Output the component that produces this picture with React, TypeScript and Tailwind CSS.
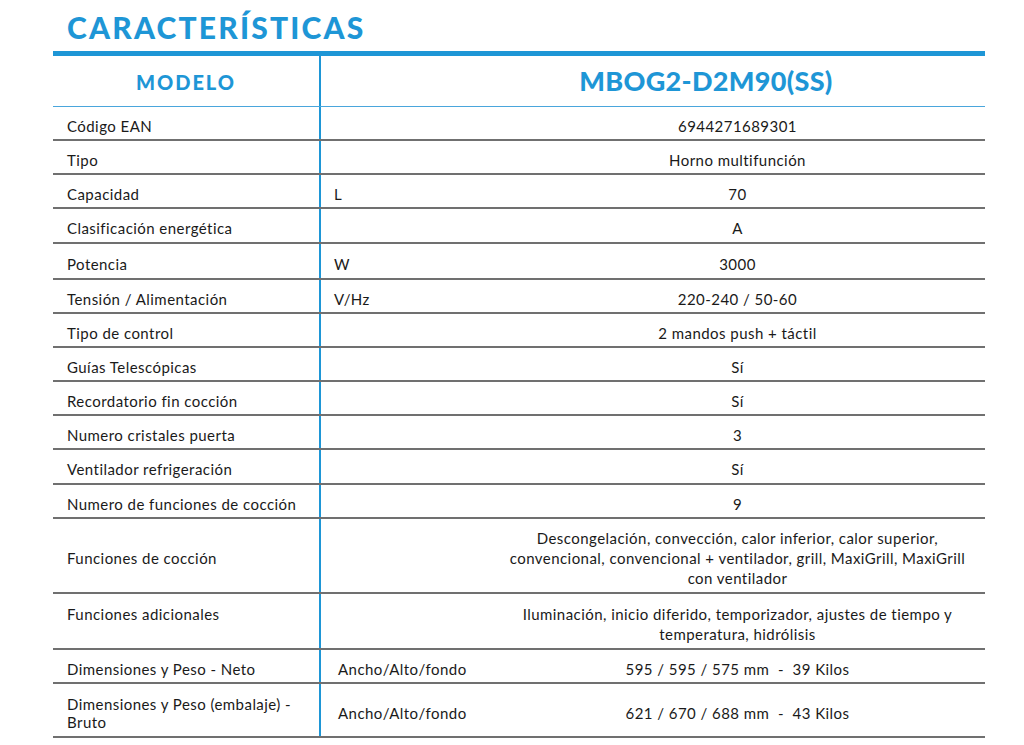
const rows: { label: string; unit?: string; value: string; h: string; labelTop?: boolean }[] = [
  { label: "Código EAN", value: "6944271689301", h: "h-[34px]" },
  { label: "Tipo", value: "Horno multifunción", h: "h-[34px]" },
  { label: "Capacidad", unit: "L", value: "70", h: "h-[34px]" },
  { label: "Clasificación energética", value: "A", h: "h-[35px]" },
  { label: "Potencia", unit: "W", value: "3000", h: "h-[36px]" },
  { label: "Tensión / Alimentación", unit: "V/Hz", value: "220-240 / 50-60", h: "h-[34px]" },
  { label: "Tipo de control", value: "2 mandos push + táctil", h: "h-[34px]" },
  { label: "Guías Telescópicas", value: "Sí", h: "h-[34px]" },
  { label: "Recordatorio fin cocción", value: "Sí", h: "h-[34px]" },
  { label: "Numero cristales puerta", value: "3", h: "h-[34px]" },
  { label: "Ventilador refrigeración", value: "Sí", h: "h-[35px]" },
  { label: "Numero de funciones de cocción", value: "9", h: "h-[34px]" },
  {
    label: "Funciones de cocción",
    value:
      "Descongelación, convección, calor inferior, calor superior,\nconvencional, convencional + ventilador, grill, MaxiGrill, MaxiGrill\ncon ventilador",
    h: "h-[75px]",
  },
  {
    label: "Funciones adicionales",
    value: "Iluminación, inicio diferido, temporizador, ajustes de tiempo y\ntemperatura, hidrólisis",
    h: "h-[56px]",
    labelTop: true,
  },
  { label: "Dimensiones y Peso - Neto", unit: "Ancho/Alto/fondo", value: "595 / 595 / 575 mm  -  39 Kilos", h: "h-[34px]" },
  {
    label: "Dimensiones y Peso (embalaje) -\nBruto",
    unit: "Ancho/Alto/fondo",
    value: "621 / 670 / 688 mm  -  43 Kilos",
    h: "h-[54px]",
  },
]

export default function App() {
  return (
    <div className="w-[1024px] h-[745px] bg-white overflow-hidden font-['Lato','Liberation_Sans',sans-serif] text-[#1a1a1a]">
      {/* Title */}
      <div className="h-[51px] pl-[67px] pt-[11px]">
        <h1 className="text-[30px] leading-[32px] font-black tracking-[2.2px] text-[#1e96d6]">CARACTERÍSTICAS</h1>
      </div>

      <div className="ml-[53px] w-[932px] border-t-[5px] border-[#1e96d6]">
        {/* Header */}
        <div className="grid grid-cols-[268px_1fr] h-[51px] border-b-[1.5px] border-[#4aa6dc]">
          <div className="border-r-2 border-[#1e96d6] flex items-center justify-center pt-[1px]">
            <span className="text-[20px] font-black tracking-[2px] text-[#1e96d6]">MODELO</span>
          </div>
          <div className="flex items-center justify-center pl-[106px] pt-[1px]">
            <span className="text-[27px] font-black tracking-[0.3px] text-[#1e96d6]">MBOG2-D2M90(SS)</span>
          </div>
        </div>

        {/* Rows */}
        {rows.map((r) => (
          <div
            key={r.label}
            className={`grid grid-cols-[268px_169px_1fr] ${r.h} border-b-2 border-[#707070] text-[15px] leading-[20px] tracking-[0.45px]`}
          >
            <div
              className={`border-r-2 border-[#1e96d6] flex pl-[14px] pr-2 leading-[18px] whitespace-pre-line ${
                r.labelTop ? "items-start pt-[11px]" : "items-center pt-[5px]"
              }`}
            >
              {r.label}
            </div>
            <div className={`flex items-center pt-[5px] ${r.unit && r.unit.length > 5 ? "pl-[17px]" : "pl-[13px]"}`}>
              {r.unit}
            </div>
            <div className="flex items-center justify-center text-center pt-[5px] whitespace-pre">{r.value}</div>
          </div>
        ))}
      </div>
    </div>
  )
}
